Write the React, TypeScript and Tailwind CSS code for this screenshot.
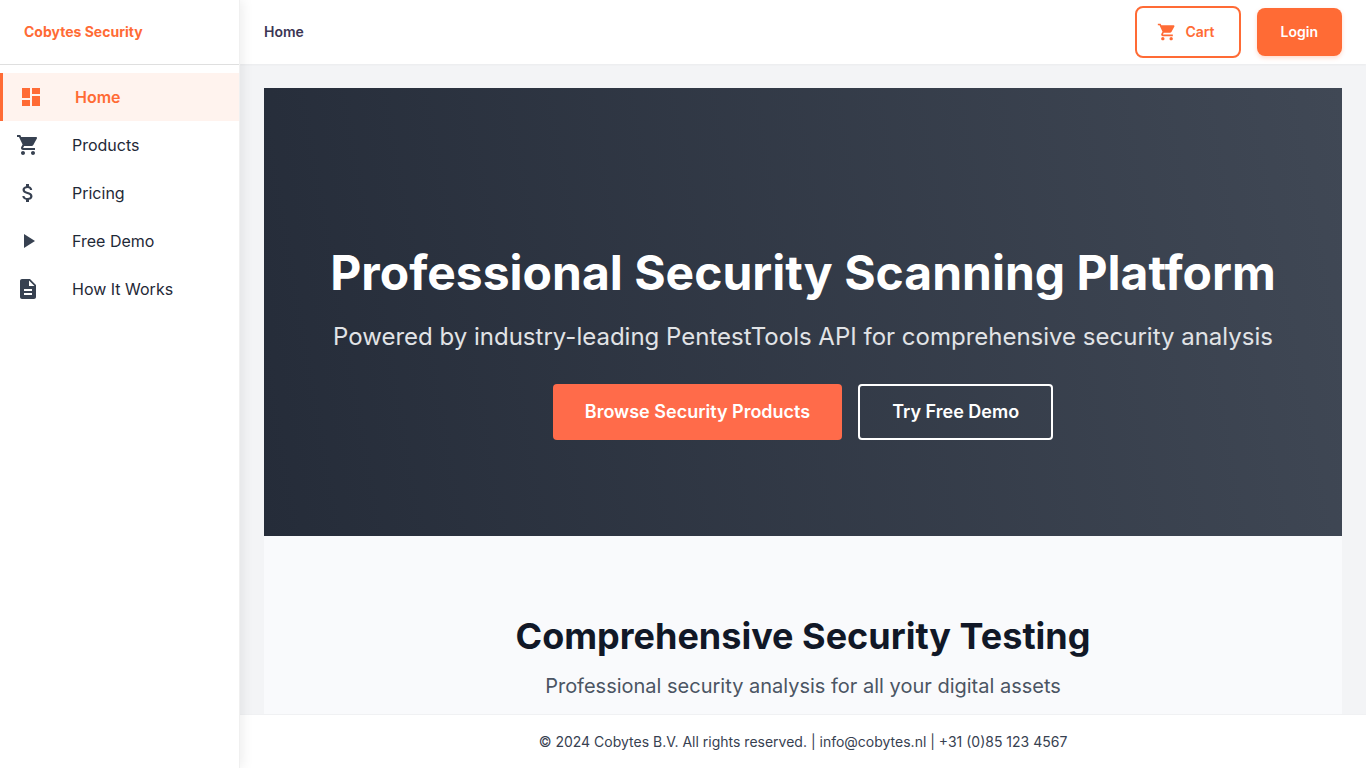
import React from "react";

const icons = {
  dashboard: "M13,3V9H21V3M13,21H21V11H13M3,21H11V15H3M3,13H11V3H3V13Z",
  cart: "M7 18c-1.1 0-1.99.9-1.99 2S5.9 22 7 22s2-.9 2-2-.9-2-2-2zM1 2v2h2l3.6 7.59-1.35 2.45c-.16.28-.25.61-.25.96 0 1.1.9 2 2 2h12v-2H7.42c-.14 0-.25-.11-.25-.25l.03-.12.9-1.63h7.45c.75 0 1.41-.41 1.75-1.03l3.58-6.49c.08-.14.12-.31.12-.48 0-.55-.45-1-1-1H5.21l-.94-2H1zm16 16c-1.1 0-1.99.9-1.99 2s.89 2 1.99 2 2-.9 2-2-.9-2-2-2z",
  dollar: "M11.8 10.9c-2.27-.59-3-1.2-3-2.15 0-1.09 1.01-1.85 2.7-1.85 1.78 0 2.44.85 2.5 2.1h2.21c-.07-1.72-1.12-3.3-3.21-3.81V3h-3v2.16c-1.94.42-3.5 1.68-3.5 3.61 0 2.31 1.91 3.46 4.7 4.13 2.5.6 3 1.48 3 2.41 0 .69-.49 1.79-2.7 1.79-2.06 0-2.87-.92-2.98-2.1h-2.2c.12 2.19 1.76 3.42 3.68 3.83V21h3v-2.15c1.95-.37 3.5-1.5 3.5-3.55 0-2.84-2.43-3.81-4.7-4.4z",
  play: "M8 5v14l11-7z",
  document: "M14 2H6c-1.1 0-2 .9-2 2v16c0 1.1.9 2 2 2h12c1.1 0 2-.9 2-2V8l-6-6zm2 16H8v-2h8v2zm0-4H8v-2h8v2zm-3-5V3.5L18.5 9H13z",
};

function Icon({ name, className }: { name: keyof typeof icons; className: string }) {
  return (
    <svg viewBox="0 0 24 24" fill="currentColor" aria-hidden="true" className={className}>
      <path d={icons[name]} />
    </svg>
  );
}

const links: { label: string; icon: keyof typeof icons }[] = [
  { label: "Products", icon: "cart" },
  { label: "Pricing", icon: "dollar" },
  { label: "Free Demo", icon: "play" },
  { label: "How It Works", icon: "document" },
];

export default function App() {
  return (
    <div className="flex h-screen overflow-hidden bg-[#f3f4f6] font-['Inter',sans-serif] text-[#1f2937]">
      <aside className="z-10 flex w-60 shrink-0 flex-col border-r border-[#f0f0f0] bg-white shadow-[2px_0_12px_rgba(0,0,0,0.08)]">
        <div className="flex h-16 shrink-0 items-center px-6 text-sm font-bold text-[#ff6b35]">
          Cobytes Security
        </div>
        <nav className="flex flex-col border-t border-[#dfdfdf] py-2">
          <a
            href="#home"
            aria-current="page"
            className="flex h-12 items-center gap-8 border-l-3 border-[#ff6b35] bg-[#fff3ee] px-4 font-semibold text-[#ff6b35]"
          >
            <Icon name="dashboard" className="size-6" />
            Home
          </a>
          {links.map((link) => (
            <a key={link.label} href="#" className="flex h-12 items-center gap-8 px-4">
              <Icon name={link.icon} className="size-6 text-[#374151]" />
              {link.label}
            </a>
          ))}
        </nav>
      </aside>

      <div className="flex min-w-0 flex-1 flex-col">
        <header className="flex h-16 shrink-0 items-center justify-between bg-white px-6 shadow-[0_1px_2px_rgba(0,0,0,0.04)]">
          <div className="text-sm font-semibold text-[#3b3654]">Home</div>
          <div className="flex items-center gap-4">
            <button
              type="button"
              className="flex h-[52px] items-center gap-2 rounded-lg border-2 border-[#ff6b35] pr-6 pl-5 text-sm font-semibold text-[#ff6b35]"
            >
              <Icon name="cart" className="size-5" />
              Cart
            </button>
            <button
              type="button"
              className="h-12 rounded-lg bg-[#ff6b35] px-6 text-sm font-semibold text-white shadow-[0_2px_4px_rgba(255,107,53,0.25)]"
            >
              Login
            </button>
          </div>
        </header>

        <main className="min-h-0 flex-1 overflow-hidden px-6 pt-6">
          <section className="flex flex-col items-center bg-linear-[80deg,#252c39,#404855] px-6 pt-[154px] pb-24 text-center text-white">
            <h1 className="text-5xl leading-[62px] font-bold">Professional Security Scanning Platform</h1>
            <p className="mt-4 text-2xl leading-[34px] text-[#e1e3e6]">
              Powered by industry-leading PentestTools API for comprehensive security analysis
            </p>
            <div className="mt-[30px] flex gap-4">
              <button type="button" className="h-14 rounded bg-[#ff6b4a] px-8 text-lg font-semibold">
                Browse Security Products
              </button>
              <button type="button" className="h-14 rounded border-2 border-white px-8 text-lg font-semibold">
                Try Free Demo
              </button>
            </div>
          </section>
          <section className="flex flex-col items-center bg-[#f9fafc] px-6 py-20 text-center">
            <h2 className="text-4xl leading-10 font-bold text-[#111827]">Comprehensive Security Testing</h2>
            <p className="mt-4 text-xl text-[#4b5563]">Professional security analysis for all your digital assets</p>
          </section>
        </main>

        <footer className="flex h-[54px] shrink-0 items-center justify-center border-t border-[#f0f1f3] bg-white text-sm text-[#374151]">
          © 2024 Cobytes B.V. All rights reserved. | info@cobytes.nl | +31 (0)85 123 4567
        </footer>
      </div>
    </div>
  );
}
